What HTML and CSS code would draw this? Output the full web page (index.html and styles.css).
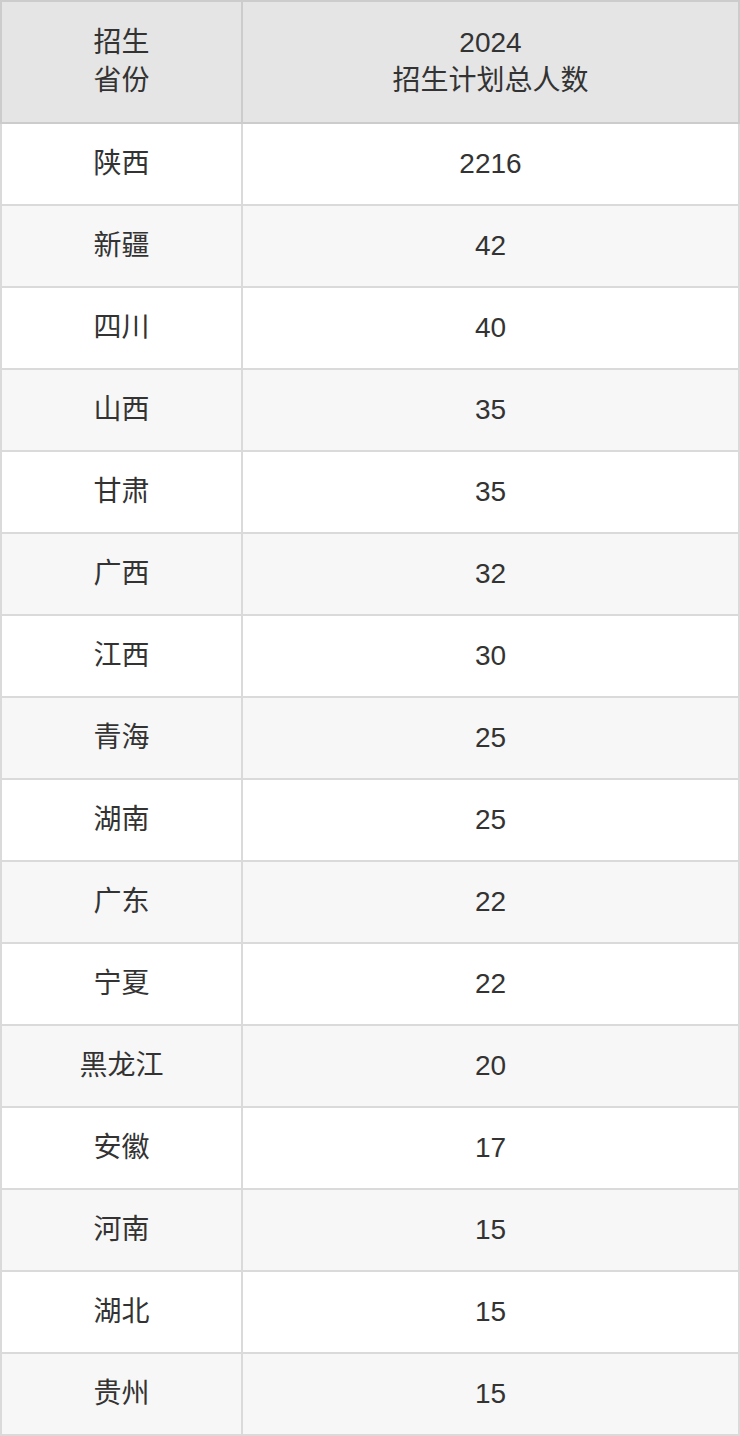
FILE: index.html
```html
<!DOCTYPE html>
<html lang="zh">
<head>
<meta charset="utf-8">
<link rel="stylesheet" href="styles.css">
</head>
<body>
<table class="plan">
<colgroup><col class="c1"><col class="c2"></colgroup>
<thead>
<tr class="head"><th>招生<br>省份</th><th>2024<br>招生计划总人数</th></tr>
</thead>
<tbody>
<tr><td>陕西</td><td>2216</td></tr>
<tr><td>新疆</td><td>42</td></tr>
<tr><td>四川</td><td>40</td></tr>
<tr><td>山西</td><td>35</td></tr>
<tr><td>甘肃</td><td>35</td></tr>
<tr><td>广西</td><td>32</td></tr>
<tr><td>江西</td><td>30</td></tr>
<tr><td>青海</td><td>25</td></tr>
<tr><td>湖南</td><td>25</td></tr>
<tr><td>广东</td><td>22</td></tr>
<tr><td>宁夏</td><td>22</td></tr>
<tr><td>黑龙江</td><td>20</td></tr>
<tr><td>安徽</td><td>17</td></tr>
<tr><td>河南</td><td>15</td></tr>
<tr><td>湖北</td><td>15</td></tr>
<tr><td>贵州</td><td>15</td></tr>
</tbody>
</table>
</body>
</html>
```
FILE: styles.css
```css
html, body {
  margin: 0;
  padding: 0;
  background: #ffffff;
}
.plan {
  width: 740px;
  table-layout: fixed;
  border-collapse: collapse;
  font-family: "Liberation Sans", "Noto Sans CJK SC", sans-serif;
  font-size: 28px;
  color: #333333;
  text-align: center;
}
.c1 { width: 241px; }
.plan th, .plan td {
  border: 2px solid #dadada;
  padding: 0;
  font-weight: normal;
}
.plan th {
  background: #e5e5e5;
  line-height: 38px;
  height: 120px;
  border-color: #cccccc;
}
.plan td {
  height: 80px;
  line-height: 32px;
}
.plan tbody tr:nth-child(even) td {
  background: #f7f7f7;
}
```
